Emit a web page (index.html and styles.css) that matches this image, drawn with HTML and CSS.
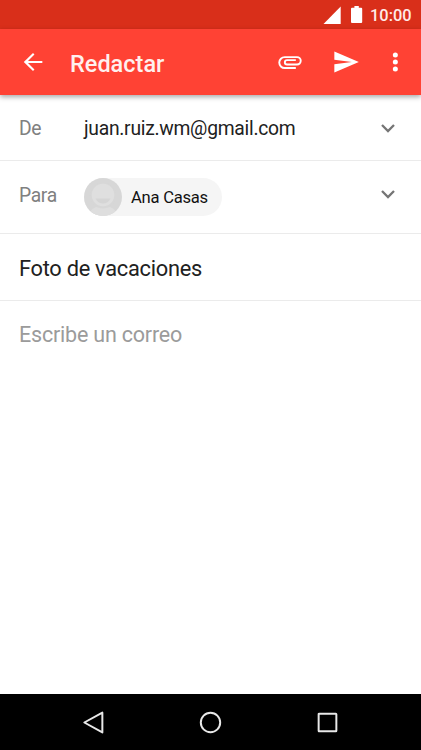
FILE: index.html
```html
<!DOCTYPE html>
<html lang="es">
<head>
<meta charset="utf-8">
<title>Redactar</title>
<link rel="stylesheet" href="styles.css">
</head>
<body>
<div class="screen">
  <div class="status">
    <svg class="signal" viewBox="0 0 18 18"><path d="M17.700 .5V18H.5z"/></svg>
    <svg class="battery" viewBox="0 0 12 18"><path d="M3.400 0h4.400v1.700h2.400q1 0 1 1v13.300q0 1-1 1H1q-1 0-1-1V2.700q0-1 1-1h2.400z"/></svg>
    <span class="time">10:00</span>
  </div>
  <header class="appbar">
    <svg class="icon back" viewBox="0 0 24 24"><path d="M20 11.050H7.700l5.550-5.550L12 4.200l-7.900 7.800 7.900 7.800 1.250-1.300L7.700 12.950H20z"/></svg>
    <h1 class="title">Redactar</h1>
    <svg class="icon attach" viewBox="0 0 24 24"><path d="M17 17.200H7.500a4.700 4.700 0 0 1 0-9.400H18a3.200 3.200 0 0 1 0 6.400H9.500a1.900 1.900 0 0 1 0-3.800H17"/></svg>
    <svg class="icon send" viewBox="0 0 24 24"><path d="M2.010 21L23 12 2.010 3 2 10l15 2-15 2z"/></svg>
    <svg class="icon more" viewBox="0 0 24 24"><circle cx="12.300" cy="6" r="2.150"/><circle cx="12.300" cy="12" r="2.150"/><circle cx="12.300" cy="18" r="2.150"/></svg>
  </header>
  <main class="form">
    <div class="row from">
      <span class="label">De</span>
      <span class="email">juan.ruiz.wm@gmail.com</span>
      <svg class="chevron" viewBox="0 0 14 9"><path d="M1 1l6 6 6-6"/></svg>
    </div>
    <div class="row to">
      <span class="label">Para</span>
      <span class="chip">
        <svg class="avatar" viewBox="0 0 38 38">
          <defs><clipPath id="disc"><circle cx="19" cy="19" r="19"/></clipPath></defs>
          <g clip-path="url(#disc)">
            <path fill="#d7d7d7" d="M0 0h38v38H0z"/>
            <path fill="#dedede" d="M6 34q3-5 8-5h10q5 0 8 5v5H6z"/>
            <circle cx="19" cy="17.500" r="13" fill="#d7d7d7"/>
            <circle cx="19" cy="17" r="11.300" fill="#dfdfdf"/>
            <path fill="#d5d5d5" d="M11.500 20.500h15q-2.500 5-7.500 5t-7.500-5z"/>
          </g>
        </svg>
        <span class="name">Ana Casas</span>
      </span>
      <svg class="chevron" viewBox="0 0 14 9"><path d="M1 1l6 6 6-6"/></svg>
    </div>
    <div class="row subject"><span>Foto de vacaciones</span></div>
    <div class="body"><span>Escribe un correo</span></div>
  </main>
  <nav class="nav">
    <svg viewBox="0 0 24 24"><path d="M20.500 2.500v19L3.200 12z"/></svg>
    <svg viewBox="0 0 24 24"><circle cx="12" cy="12" r="9.300"/></svg>
    <svg viewBox="0 0 24 24"><rect x="3.500" y="3.500" width="17" height="17" rx=".5"/></svg>
  </nav>
</div>
</body>
</html>
```
FILE: styles.css
```css
* { box-sizing: border-box; }
body { margin: 0; font-family: Roboto, sans-serif; color: #212121; }
svg { display: block; flex: none; }
span { white-space: nowrap; }
.screen { width: 421px; height: 750px; display: flex; flex-direction: column; background: #fff; overflow: hidden; }
.status { height: 29px; background: #d92f1a; display: flex; align-items: flex-start; padding: 6px 9px 0 323px; color: #fff; }
.status svg { fill: #fff; }
.signal { width: 18px; height: 18px; }
.battery { width: 12px; height: 18px; margin-left: 10px; }
.time { margin-left: 7px; font-size: 16.400px; line-height: 19px; font-weight: 500; color: #ffeae7; }
.appbar { height: 66px; background: #ff4234; display: flex; align-items: center; padding: 0 12px 0 19px; box-shadow: 0 2px 5px rgba(0, 0, 0, .35); position: relative; }
.icon { width: 28px; height: 28px; fill: #fff; }
.title { margin: 3px 0 0 23px; width: 205.500px; font-size: 23.500px; line-height: 28px; font-weight: 500; color: #fff0ee; }
.attach { fill: none; stroke: #fff; stroke-width: 1.650; }
.send { margin-left: 28px; }
.more { margin-left: 21.500px; }
.form { flex: 1; display: flex; flex-direction: column; }
.row { display: flex; align-items: center; border-bottom: 1px solid #ebebeb; padding: 0 26px 0 19px; }
.label { width: 65px; font-size: 19.300px; letter-spacing: -.35px; color: #808080; }
.email { flex: 1; font-size: 19.300px; letter-spacing: -.27px; }
.chevron { width: 14px; height: 9px; fill: none; stroke: #757575; stroke-width: 2.300; margin: 0 0 0 auto; }
.from { height: 66px; padding-top: 2px; }
.to { height: 73px; }
.to .label { position: relative; top: -2px; }
.to .chevron { position: relative; top: -3px; }
.chip { width: 137.500px; height: 38px; border-radius: 19px; background: #f5f5f5; display: flex; align-items: center; }
.avatar { width: 38px; height: 38px; }
.name { margin-left: 9px; font-size: 16.600px; letter-spacing: -.25px; color: #111; }
.subject { height: 67px; font-size: 21.800px; letter-spacing: -.27px; padding-top: 2px; }
.body { padding: 20px 19px; font-size: 21.500px; line-height: 27px; letter-spacing: -.2px; color: #9b9b9b; }
.nav { height: 56px; background: #000; display: flex; align-items: center; justify-content: space-between; padding: 0 81px; }
.nav svg { width: 25px; height: 25px; fill: none; stroke: #e8e8e8; stroke-width: 1.900; stroke-linejoin: round; }
```
